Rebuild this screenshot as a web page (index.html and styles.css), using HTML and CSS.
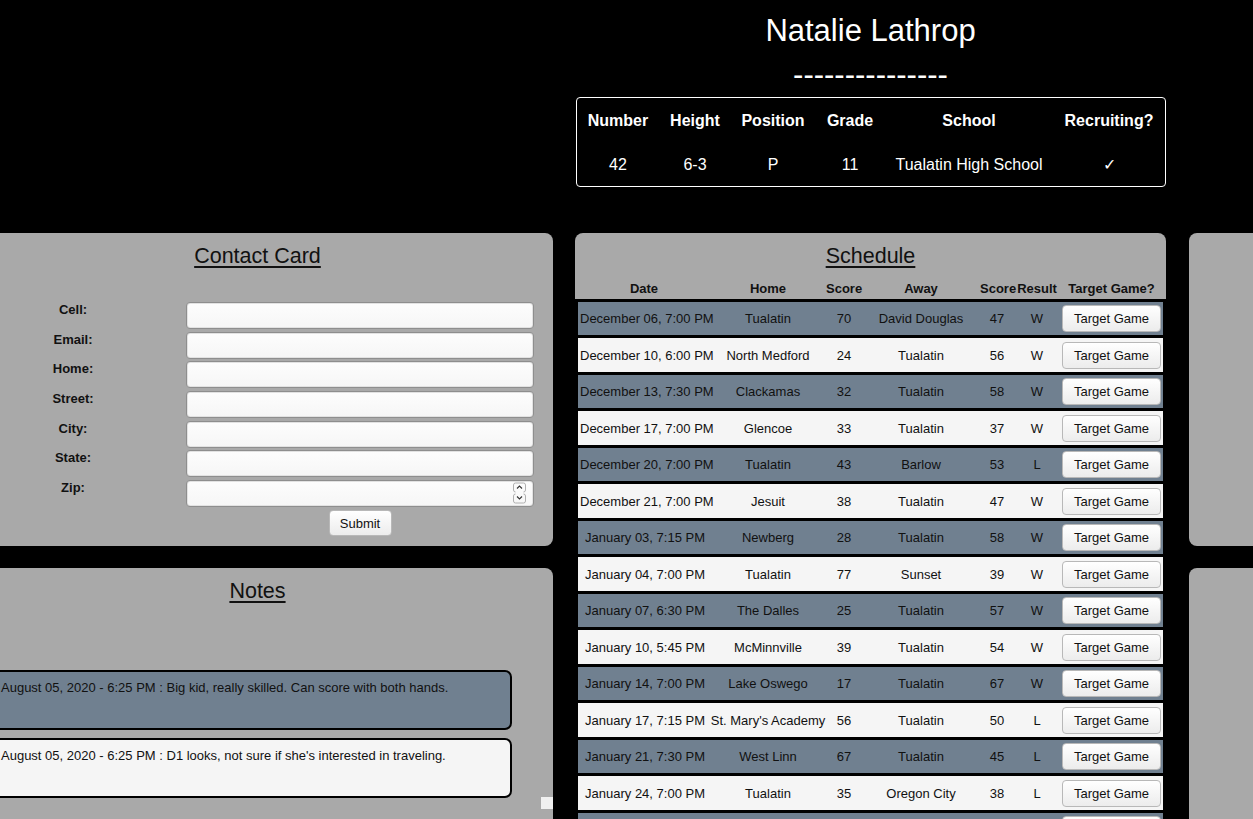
FILE: index.html
```html
<!DOCTYPE html>
<html lang="en">
<head>
<meta charset="utf-8">
<title>Natalie Lathrop</title>
<link rel="stylesheet" href="styles.css">
</head>
<body>
<div class="page">
  <header class="profile">
    <h1 class="profile-name">Natalie Lathrop</h1>
    <div class="dashes">---------------</div>
    <table class="stats">
      <colgroup>
        <col class="c-num"><col class="c-height"><col class="c-pos"><col class="c-grade"><col class="c-school"><col class="c-rec">
      </colgroup>
      <thead>
        <tr><th>Number</th><th>Height</th><th>Position</th><th>Grade</th><th>School</th><th>Recruiting?</th></tr>
      </thead>
      <tbody>
        <tr><td>42</td><td>6-3</td><td>P</td><td>11</td><td>Tualatin High School</td><td>✓</td></tr>
      </tbody>
    </table>
  </header>

  <section class="panel contact">
    <h2 class="panel-title">Contact Card</h2>
    <form class="contact-form">
      <label class="field-label" for="cell">Cell:</label><input class="field" id="cell" type="text">
      <label class="field-label" for="email">Email:</label><input class="field" id="email" type="text">
      <label class="field-label" for="home">Home:</label><input class="field" id="home" type="text">
      <label class="field-label" for="street">Street:</label><input class="field" id="street" type="text">
      <label class="field-label" for="city">City:</label><input class="field" id="city" type="text">
      <label class="field-label" for="state">State:</label><input class="field" id="state" type="text">
      <label class="field-label" for="zip">Zip:</label>
      <div class="zip-wrap">
        <input class="field" id="zip" type="text" inputmode="numeric">
        <svg class="spin" width="13" height="22" viewBox="0 0 13 22" aria-hidden="true">
          <path d="M2.5 1 H10.5 M2.5 1 Q0.5 1 0.5 3 V8 Q0.5 10 2.5 10 M10.5 1 Q12.5 1 12.5 3 V8 Q12.5 10 10.5 10" fill="none" stroke="#b0b0b0" stroke-width="1"/>
          <path d="M4 6.5 L6.5 4 L9 6.5" fill="none" stroke="#333" stroke-width="1.1"/>
          <path d="M2.5 12 Q0.5 12 0.5 14 V19 Q0.5 21 2.5 21 H10.5 M10.5 12 Q12.5 12 12.5 14 V19 Q12.5 21 10.5 21" fill="none" stroke="#b0b0b0" stroke-width="1"/>
          <path d="M4 14.5 L6.5 17 L9 14.5" fill="none" stroke="#333" stroke-width="1.1"/>
        </svg>
      </div>
      <button class="btn submit" type="button">Submit</button>
    </form>
  </section>

  <section class="schedule">
    <div class="schedule-head">
      <h2 class="panel-title">Schedule</h2>
      <div class="sched-cols sched-header">
        <span>Date</span><span>Home</span><span>Score</span><span>Away</span><span>Score</span><span>Result</span><span>Target Game?</span>
      </div>
    </div>
    <div class="schedule-rows">
      <div class="sched-cols game dark"><span>December 06, 7:00 PM</span><span>Tualatin</span><span>70</span><span>David Douglas</span><span>47</span><span>W</span><button class="btn target" type="button">Target Game</button></div>
      <div class="sched-cols game light"><span>December 10, 6:00 PM</span><span>North Medford</span><span>24</span><span>Tualatin</span><span>56</span><span>W</span><button class="btn target" type="button">Target Game</button></div>
      <div class="sched-cols game dark"><span>December 13, 7:30 PM</span><span>Clackamas</span><span>32</span><span>Tualatin</span><span>58</span><span>W</span><button class="btn target" type="button">Target Game</button></div>
      <div class="sched-cols game light"><span>December 17, 7:00 PM</span><span>Glencoe</span><span>33</span><span>Tualatin</span><span>37</span><span>W</span><button class="btn target" type="button">Target Game</button></div>
      <div class="sched-cols game dark"><span>December 20, 7:00 PM</span><span>Tualatin</span><span>43</span><span>Barlow</span><span>53</span><span>L</span><button class="btn target" type="button">Target Game</button></div>
      <div class="sched-cols game light"><span>December 21, 7:00 PM</span><span>Jesuit</span><span>38</span><span>Tualatin</span><span>47</span><span>W</span><button class="btn target" type="button">Target Game</button></div>
      <div class="sched-cols game dark"><span>January 03, 7:15 PM</span><span>Newberg</span><span>28</span><span>Tualatin</span><span>58</span><span>W</span><button class="btn target" type="button">Target Game</button></div>
      <div class="sched-cols game light"><span>January 04, 7:00 PM</span><span>Tualatin</span><span>77</span><span>Sunset</span><span>39</span><span>W</span><button class="btn target" type="button">Target Game</button></div>
      <div class="sched-cols game dark"><span>January 07, 6:30 PM</span><span>The Dalles</span><span>25</span><span>Tualatin</span><span>57</span><span>W</span><button class="btn target" type="button">Target Game</button></div>
      <div class="sched-cols game light"><span>January 10, 5:45 PM</span><span>McMinnville</span><span>39</span><span>Tualatin</span><span>54</span><span>W</span><button class="btn target" type="button">Target Game</button></div>
      <div class="sched-cols game dark"><span>January 14, 7:00 PM</span><span>Lake Oswego</span><span>17</span><span>Tualatin</span><span>67</span><span>W</span><button class="btn target" type="button">Target Game</button></div>
      <div class="sched-cols game light"><span>January 17, 7:15 PM</span><span>St. Mary's Academy</span><span>56</span><span>Tualatin</span><span>50</span><span>L</span><button class="btn target" type="button">Target Game</button></div>
      <div class="sched-cols game dark"><span>January 21, 7:30 PM</span><span>West Linn</span><span>67</span><span>Tualatin</span><span>45</span><span>L</span><button class="btn target" type="button">Target Game</button></div>
      <div class="sched-cols game light"><span>January 24, 7:00 PM</span><span>Tualatin</span><span>35</span><span>Oregon City</span><span>38</span><span>L</span><button class="btn target" type="button">Target Game</button></div>
      <div class="sched-cols game dark"><span></span><span></span><span></span><span></span><span></span><span></span><button class="btn target" type="button">Target Game</button></div>
    </div>
  </section>

  <section class="panel side side-top"></section>

  <section class="panel notes">
    <h2 class="panel-title">Notes</h2>
    <div class="note-list">
      <div class="note dark">August 05, 2020 - 6:25 PM : Big kid, really skilled. Can score with both hands.</div>
      <div class="note light">August 05, 2020 - 6:25 PM : D1 looks, not sure if she's interested in traveling.</div>
    </div>
    <div class="scroll-stub"></div>
  </section>

  <section class="panel side side-bottom"></section>
</div>
</body>
</html>
```

FILE: styles.css
```css
html, body {
  margin: 0;
  padding: 0;
  background: #000;
  overflow: hidden;
  height: 100%;
}

body {
  font-family: "Liberation Sans", Arial, sans-serif;
  color: #111;
}

.page {
  display: grid;
  grid-template-columns: 591px 591px 591px;
  grid-template-rows: 211px 313px auto;
  column-gap: 22px;
  row-gap: 22px;
  margin-left: -38px;
  width: max-content;
}

/* ---------- profile header ---------- */
.profile {
  grid-column: 2;
  grid-row: 1;
  text-align: center;
  color: #fff;
  padding-top: 12.5px;
}

.profile-name {
  margin: 0;
  font-size: 31px;
  font-weight: normal;
  line-height: 35.6px;
}

.dashes {
  font-size: 31px;
  line-height: 35.6px;
  margin-top: 9px;
}

.stats {
  margin-top: 4.3px;
  margin-left: 1px;
  width: 590px;
  table-layout: fixed;
  border: 1px solid #fff;
  border-radius: 4px;
  border-collapse: separate;
  border-spacing: 0;
  color: #fff;
}

.c-num { width: 82px; }
.c-height { width: 72px; }
.c-pos { width: 84px; }
.c-grade { width: 70px; }
.c-school { width: 168px; }
.c-rec { width: 112px; }

.stats th,
.stats td {
  padding: 14px 0 12px;
  font-size: 16px;
  line-height: 18px;
  text-align: center;
  white-space: nowrap;
}

.stats th { font-weight: bold; }
.stats td { font-weight: normal; }

/* ---------- panels ---------- */
.panel {
  background: #a9a9a9;
  border-radius: 8px;
}

.panel-title {
  margin: 0;
  padding-top: 11px;
  font-size: 21.5px;
  font-weight: normal;
  line-height: 24.7px;
  text-align: center;
  text-decoration: underline;
  text-decoration-thickness: 1.5px;
  text-underline-offset: 3px;
  color: #111;
}

/* ---------- contact card ---------- */
.contact {
  grid-column: 1;
  grid-row: 2;
}

.contact-form {
  display: grid;
  grid-template-columns: 222px 348px;
  grid-auto-rows: 27.67px;
  column-gap: 2px;
  row-gap: 2px;
  margin-top: 33.3px;
}

.field-label {
  font-size: 13px;
  font-weight: bold;
  line-height: 15px;
  text-align: center;
  color: #111;
  align-self: start;
}

.field {
  box-sizing: border-box;
  width: 348px;
  height: 27px;
  margin: 0;
  border: 1px solid #8e8e8e;
  border-radius: 4px;
  background: linear-gradient(#fdfdfd, #f6f6f6);
  box-shadow: inset 0 0 0 1px #e2e2e2;
  font: 13px "Liberation Sans", Arial, sans-serif;
  padding: 0 6px;
}

.zip-wrap {
  position: relative;
  height: 27px;
}

.spin {
  position: absolute;
  right: 8px;
  top: 2px;
}

.btn {
  box-sizing: border-box;
  margin: 0;
  padding: 0;
  font: 13px "Liberation Sans", Arial, sans-serif;
  color: #111;
  background: linear-gradient(#ffffff, #ececec);
  border: 1px solid #b8b8b8;
  border-radius: 4px;
}

.submit {
  grid-column: 2;
  justify-self: center;
  width: 63px;
  height: 26px;
  margin-top: 0.8px;
}

/* ---------- schedule ---------- */
.schedule {
  grid-column: 2;
  grid-row: 2 / 4;
}

.schedule-head {
  background: #a9a9a9;
  border-radius: 8px 8px 0 0;
}

.sched-cols {
  display: grid;
  grid-template-columns: 132px 116px 36px 118px 34px 46px 1fr;
  align-items: center;
  text-align: center;
  font-size: 13px;
  line-height: 15px;
  white-space: nowrap;
}

.sched-header {
  padding: 11.8px 3px 3.3px;
  font-weight: bold;
  color: #111;
}

.schedule-rows {
  display: flex;
  flex-direction: column;
  gap: 3px;
  padding: 3px;
}

.game {
  height: 33.5px;
  color: #111;
}

.game > span:first-child {
  padding-left: 2px;
}

.game.dark { background: #708090; }
.game.light { background: #f5f5f5; }

.target {
  justify-self: center;
  width: 99px;
  height: 27px;
}

/* ---------- right column ---------- */
.side-top {
  grid-column: 3;
  grid-row: 2;
  margin-left: 1px;
}

.side-bottom {
  grid-column: 3;
  grid-row: 3;
  min-height: 420px;
  margin-left: 1px;
}

/* ---------- notes ---------- */
.notes {
  grid-column: 1;
  grid-row: 3;
  position: relative;
  min-height: 420px;
}

.note-list {
  display: flex;
  flex-direction: column;
  gap: 8px;
  margin-top: 66.3px;
  padding: 0 41px 0 18px;
}

.note {
  box-sizing: border-box;
  height: 60px;
  border: 2px solid #000;
  border-radius: 7px;
  padding: 8px 19px;
  font-size: 13px;
  line-height: 15px;
  color: #111;
}

.note.dark { background: #708090; }
.note.light { background: #f5f5f5; }

.scroll-stub {
  position: absolute;
  right: 0;
  top: 229px;
  width: 12px;
  height: 12px;
  background: #f0f0f0;
}
```
